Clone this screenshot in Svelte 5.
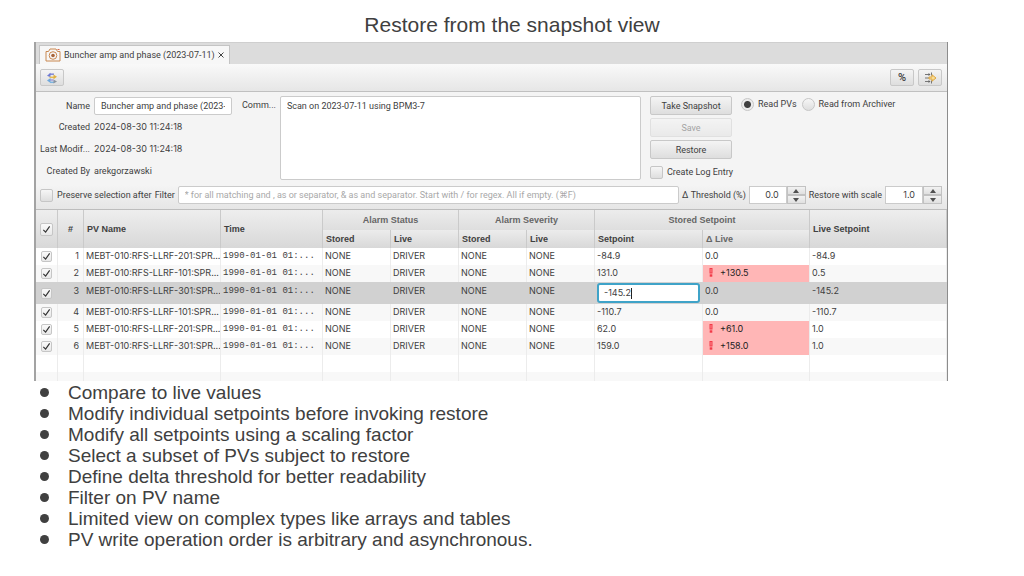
<script>
  let name = $state('Buncher amp and phase (2023-07-11)');
  let comment = $state('Scan on 2023-07-11 using BPM3-7');
  let source = $state('pvs');
  let filter = $state('');
  let threshold = $state('0.0');
  let scale = $state('1.0');
  let all = $state(true);

  let rows = $state([
    { id: 1, on: true, pv: 'MEBT-010:RFS-LLRF-201:SPR...', status: 'DRIVER', set: '-84.9', delta: '0.0', live: '-84.9' },
    { id: 2, on: true, pv: 'MEBT-010:RFS-LLRF-101:SPR...', status: 'DRIVER', set: '131.0', delta: '+130.5', live: '0.5', alert: true },
    { id: 3, on: true, pv: 'MEBT-010:RFS-LLRF-301:SPR...', status: 'DRIVER', set: '-145.2', delta: '0.0', live: '-145.2', editing: true },
    { id: 4, on: true, pv: 'MEBT-010:RFS-LLRF-101:SPR...', status: 'DRIVER', set: '-110.7', delta: '0.0', live: '-110.7' },
    { id: 5, on: true, pv: 'MEBT-010:RFS-LLRF-201:SPR...', status: 'DRIVER', set: '62.0', delta: '+61.0', live: '1.0', alert: true },
    { id: 6, on: true, pv: 'MEBT-010:RFS-LLRF-301:SPR...', status: 'DRIVER', set: '159.0', delta: '+158.0', live: '1.0', alert: true }
  ]);

  const points = [
    'Compare to live values',
    'Modify individual setpoints before invoking restore',
    'Modify all setpoints using a scaling factor',
    'Select a subset of PVs subject to restore',
    'Define delta threshold for better readability',
    'Filter on PV name',
    'Limited view on complex types like arrays and tables',
    'PV write operation order is arbitrary and asynchronous.'
  ];
</script>

{#snippet spinner(label)}
  <span class="steps">
    <button aria-label="Increase {label}"><svg viewBox="0 0 6 4"><path d="M0 4 3 0l3 4z" /></svg></button>
    <button aria-label="Decrease {label}"><svg viewBox="0 0 6 4"><path d="M0 0h6L3 4z" /></svg></button>
  </span>
{/snippet}

<main>
  <h1>Restore from the snapshot view</h1>

  <section class="window">
    <div class="tabs">
      <div class="tab">
        <svg class="camera" viewBox="0 0 16 14" fill="none" stroke="#c98850">
          <path d="M1 3.500h2.500L5 1h6l1.500 2.500H15v9.500H1z" />
          <circle cx="8" cy="7.500" r="3.800" />
          <circle cx="8" cy="7.500" r="1.800" fill="#a8653a" stroke="none" />
          <path d="M12.500 1.500h2" stroke="#d96a4a" />
        </svg>
        <span>Buncher amp and phase (2023-07-11)</span>
        <button class="close" aria-label="Close tab">
          <svg viewBox="0 0 6 6" stroke="#444" stroke-width="1"><path d="M.5.5l5 5M5.500.5l-5 5" /></svg>
        </button>
      </div>
    </div>

    <div class="toolbar">
      <button class="tool" aria-label="Toggle live values">
        <svg width="12" height="12" viewBox="0 0 12 12" fill="none" stroke-width="1.500">
          <path d="M3.500 2.200H8" stroke="#8088d8" />
          <path d="M1 3.800 4.500.8v4.500z" fill="#6f7bd4" />
          <path d="M3.500 5.300H8" stroke="#e6bd55" />
          <path d="M7.500 2.500 11 4.800 7.500 7.300z" fill="#e0b040" />
          <path d="M3 8h4.500" stroke="#a79ad8" />
          <path d="M1 8.500 4.500 6v5z" fill="#6fa8dc" />
          <path d="M4 10.300h4" stroke="#7db4e0" />
          <path d="M7.500 7.600 11 9.500 7.500 11.600z" fill="#8a94a0" />
        </svg>
      </button>
      <span class="grow"></span>
      <button class="tool percent">%</button>
      <button class="tool" aria-label="Hide equal items">
        <svg width="13" height="12" viewBox="0 0 13 12" fill="none" stroke="#777">
          <path d="M1 2.500h5M1 9.500h5M7.500.5v3M7.500 8.500v3" />
          <path d="M4.500 1 6.500 2.500 4.500 4zM4.500 8 6.500 9.500 4.500 11z" fill="#666" stroke="none" />
          <path d="M1 6h5" />
          <path d="M5 5h3V2.800L12 6 8 9.200V7H5z" fill="#f9dc95" stroke="#dba031" stroke-width=".9" />
        </svg>
      </button>
    </div>

    <div class="form">
      <div class="meta">
        <label for="name">Name</label>
        <input id="name" class="field" bind:value={name} />
        <span class="key">Created</span><span class="value">2024-08-30 11:24:18</span>
        <span class="key">Last Modif...</span><span class="value">2024-08-30 11:24:18</span>
        <span class="key">Created By</span><span>arekgorzawski</span>
      </div>
      <label class="comment-label" for="comment">Comm...</label>
      <textarea id="comment" class="field" bind:value={comment}></textarea>
      <div class="actions">
        <button class="btn">Take Snapshot</button>
        <button class="btn" disabled>Save</button>
        <button class="btn">Restore</button>
        <label class="log"><input type="checkbox" class="box" />Create Log Entry</label>
      </div>
      <div class="radios">
        <label><input type="radio" value="pvs" bind:group={source} />Read PVs</label>
        <label><input type="radio" value="archiver" bind:group={source} />Read from Archiver</label>
      </div>
    </div>

    <div class="filters">
      <label class="preserve"><input type="checkbox" class="box" />Preserve selection after</label>
      <label for="filter">Filter</label>
      <input id="filter" class="field" bind:value={filter} placeholder="* for all matching and , as or separator, & as and separator. Start with / for regex. All if empty. (⌘F)" />
      <label for="threshold">Δ Threshold (%)</label>
      <span class="spinner"><input id="threshold" bind:value={threshold} />{@render spinner('threshold')}</span>
      <label for="scale">Restore with scale</label>
      <span class="spinner"><input id="scale" bind:value={scale} />{@render spinner('scale')}</span>
    </div>

    <table>
      <colgroup>
        <col class="c-check" /><col class="c-id" /><col class="c-pv" /><col class="c-time" />
        <col class="c-alarm" /><col class="c-alarm" /><col class="c-alarm" /><col class="c-alarm" />
        <col class="c-set" /><col class="c-delta" /><col />
      </colgroup>
      <thead>
        <tr>
          <th rowspan="2" class="mid"><input type="checkbox" class="box" aria-label="Select all" bind:checked={all} /></th>
          <th rowspan="2" class="mid">#</th>
          <th rowspan="2">PV Name</th>
          <th rowspan="2">Time</th>
          <th colspan="2" class="group">Alarm Status</th>
          <th colspan="2" class="group">Alarm Severity</th>
          <th colspan="2" class="group">Stored Setpoint</th>
          <th rowspan="2">Live Setpoint</th>
        </tr>
        <tr class="sub">
          <th>Stored</th><th>Live</th><th>Stored</th><th>Live</th><th>Setpoint</th><th class="soft">Δ Live</th>
        </tr>
      </thead>
      <tbody>
        {#each rows as row (row.id)}
          <tr class:selected={row.editing}>
            <td class="mid"><input type="checkbox" class="box small" aria-label="Select row {row.id}" bind:checked={row.on} /></td>
            <td class="num">{row.id}</td>
            <td>{row.pv}</td>
            <td class="mono">1990-01-01 01:...</td>
            <td>NONE</td>
            <td>{row.status}</td>
            <td>NONE</td>
            <td>NONE</td>
            {#if row.editing}
              <td class="edit"><div class="editor"><input aria-label="Setpoint" bind:value={row.set} /><i></i></div></td>
            {:else}
              <td>{row.set}</td>
            {/if}
            <td class:alert={row.alert}>
              {#if row.alert}
                <svg class="bang" viewBox="0 0 4 9" fill="none" stroke="#f23a48"><rect x="1" y=".5" width="2" height="4.500" fill="#ff8a90" /><rect x=".7" y="6.300" width="2.600" height="2.400" fill="#f23a48" stroke="none" /></svg>
              {/if}{row.delta}
            </td>
            <td>{row.live}</td>
          </tr>
        {/each}
        <tr class="blank"><td></td><td></td><td></td><td></td><td></td><td></td><td></td><td></td><td></td><td></td><td></td></tr>
        <tr class="blank last"><td></td><td></td><td></td><td></td><td></td><td></td><td></td><td></td><td></td><td></td><td></td></tr>
      </tbody>
    </table>
  </section>

  <ul>
    {#each points as point}
      <li>{point}</li>
    {/each}
  </ul>
</main>

<style>
  :global(body) { margin: 0; background: #fff; }
  main { padding: 10px 76px 0 34px; font-family: 'Liberation Sans', Arial, sans-serif; color: #404040; }
  h1 { margin: 0 -42px 2px 0; font-size: 21px; font-weight: 400; line-height: 30px; text-align: center; }

  .window { border-left: 2px solid #a3a3a3; border-right: 1px solid #8c8c8c; background: #f4f4f4; font: 9px/14px Roboto, sans-serif; color: #404040; }
  .window input, .window textarea, .window button { font: inherit; color: inherit; box-sizing: border-box; margin: 0; }
  .window label, .window span { white-space: nowrap; }
  .window .value, .window table, .window .spinner input { font-family: Inter, sans-serif; }

  .tabs { display: flex; height: 22px; padding: 2px 3px 0; box-sizing: border-box; background: #dcdcdc; border-top: 1px solid #cfcfcf; }
  .tab { display: flex; align-items: center; gap: 3px; padding: 0 5px; background: #f7f7f7; border: 1px solid #c4c4c4; border-bottom: 0; }
  .camera { width: 16px; height: 14px; }
  .close { display: flex; padding: 0; border: 0; background: none; margin-left: 2px; }
  .close svg { width: 6px; height: 6px; }

  .toolbar { display: flex; align-items: center; gap: 4px; height: 28px; padding: 0 5px 0 4px; box-sizing: border-box; background: linear-gradient(#f9f9f9, #e6e6e6); border-bottom: 1px solid #c0c0c0; }
  .grow { flex: 1; }
  .tool, .btn { border: 1px solid #c8c8c8; border-radius: 2px; background: linear-gradient(#f4f4f4, #dedede); padding: 0; }
  .tool { display: flex; align-items: center; justify-content: center; width: 24px; height: 17px; }
  .window .percent { font-weight: 500; font-size: 11px; }

  .form { display: flex; padding: 4px 5px 3px 4px; }
  .meta { display: grid; grid-template-columns: 50px 138px; grid-template-rows: 20px 22px 21px 23px; column-gap: 4px; align-items: center; }
  .meta label, .key { justify-self: end; }
  .field { border: 1px solid #cbcbcb; border-radius: 2px; background: #fff; padding: 0 6px; outline: 0; min-width: 0; }
  .meta .field { height: 18px; width: 100%; }
  .comment-label { padding: 2px 4px 0 10px; }
  textarea { flex: 1; height: 84px; resize: none; margin-top: 1px; }
  textarea.field { padding: 2px 6px; }
  .actions { display: flex; flex-direction: column; gap: 3px; width: 82px; padding: 0 9px; }
  .btn { height: 19px; }
  .btn:disabled { opacity: .45; }
  .log { margin-top: 3px; }
  .log, .preserve, .radios label { display: flex; align-items: center; gap: 4px; }
  .radios { display: flex; align-items: flex-start; gap: 5px; width: 201px; padding-top: 1px; }

  .box, input[type='radio'] { appearance: none; flex: none; width: 13px; height: 13px; border: 1px solid #c6c6c6; border-radius: 2px; background: linear-gradient(#f6f6f6, #dedede); display: block; }
  input[type='radio'] { border-radius: 50%; }
  input[type='radio']:checked { background: radial-gradient(circle, #404040 3px, #ececec 4px); }
  .box:checked { background: url("data:image/svg+xml,%3Csvg xmlns='http://www.w3.org/2000/svg' viewBox='0 0 10 10'%3E%3Cpath d='M1.500 5.500 4 8 8.500 1.500' fill='none' stroke='%23333' stroke-width='1.300'/%3E%3C/svg%3E") center / 9px no-repeat, linear-gradient(#fafafa, #e8e8e8); }
  .box.small { width: 11px; height: 11px; }

  .filters { display: flex; align-items: center; gap: 3px; height: 25px; padding: 0 5px 4px 4px; box-sizing: border-box; background: linear-gradient(#f4f4f4, #e6e6e6); border-bottom: 1px solid #bdbdbd; }
  .filters .field { flex: 1; height: 18px; }
  .field::placeholder { color: #a8a8a8; }
  .spinner { display: flex; height: 18px; }
  .spinner input { width: 38px; padding: 0 7px; text-align: right; border: 1px solid #cbcbcb; background: #fff; }
  .steps { display: flex; flex-direction: column; }
  .steps button { display: flex; align-items: center; justify-content: center; width: 19px; height: 9px; padding: 0; border: 1px solid #c2c2c2; background: linear-gradient(#f2f2f2, #e0e0e0); }
  .steps svg { width: 6px; height: 4px; fill: #505050; }

  table { width: 100%; table-layout: fixed; border-collapse: separate; border-spacing: 0; }
  .c-check { width: 22px; } .c-id { width: 26px; } .c-pv { width: 137px; } .c-time { width: 102px; }
  .c-alarm { width: 68px; } .c-set { width: 108px; } .c-delta { width: 107px; }
  th, td { padding: 0 2px; text-align: left; white-space: nowrap; overflow: hidden; border-right: 1px solid #ececec; box-sizing: border-box; }
  th { height: 20px; padding: 0 3px; font: bold 9px/12px 'Liberation Sans', Arial, sans-serif; background: linear-gradient(#eeeeee, #d8d8d8); border-right-color: #cacaca; }
  th.group { text-align: center; color: #666; background: linear-gradient(#ececec, #dedede); }
  .sub th { height: 18px; background: linear-gradient(#ececec, #d8d8d8); }
  th.soft { color: #666; }
  th.mid, td.mid { padding: 0; text-align: center; }
  .mid .box { margin: 0 auto; }
  td { height: 17px; padding-bottom: 2px; background: #fff; }
  tbody tr:nth-child(even) td { background: #f8f8f8; }
  .num { text-align: right; padding-right: 4px; }
  .window .mono { font-family: 'Liberation Mono', monospace; }
  tbody tr.selected td { height: 22px; padding-bottom: 4px; background: #d1d1d1; border-right-color: #d1d1d1; }
  tbody tr.selected td.mid, tbody tr.selected td.edit { padding-bottom: 0; }
  tbody td.alert { background: #ffb6b6; color: #222; }
  tbody tr:nth-child(even) td.alert { background: #ffb6b6; }
  .bang { width: 4px; height: 9px; margin: 0 7px 0 4px; vertical-align: -1px; }
  .editor { display: flex; align-items: center; height: 20px; box-sizing: border-box; padding-left: 5px; border: 2px solid #3fa3c8; border-radius: 3px; background: #fff; }
  .editor input { width: 27px; padding: 0; border: 0; outline: 0; background: none; }
  .editor i { width: 1px; height: 11px; background: #222; }
  .blank.last td { height: 9px; }

  ul { margin: 1px 0 0; padding: 0 0 0 34px; font-size: 19px; line-height: 21px; list-style: none; }
  li { display: flex; align-items: center; }
  li::before { content: ''; width: 9px; height: 9px; margin-left: -28px; margin-right: 19px; border-radius: 50%; background: #404040; }
</style>
